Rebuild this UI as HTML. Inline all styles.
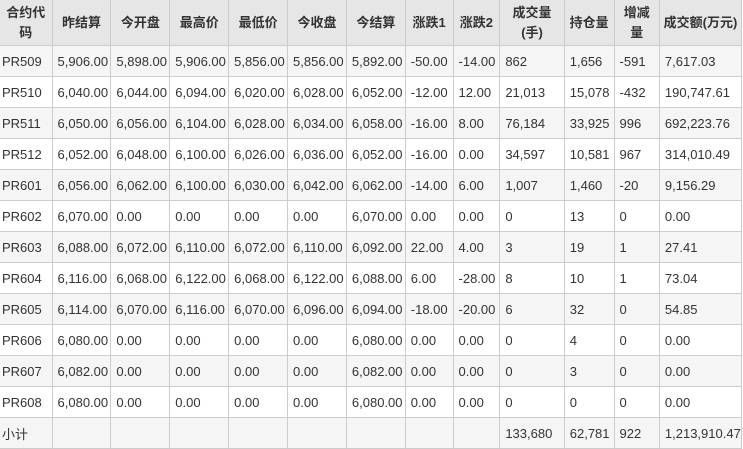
<!DOCTYPE html>
<html><head><meta charset="utf-8"><style>
body{margin:0;background:#fff;overflow:hidden}
table{border-collapse:collapse;table-layout:fixed;font-family:"Liberation Sans","Noto Sans CJK SC",sans-serif;font-size:13px;color:#333;position:absolute;left:-1px;top:-1px}
td,th{border:1px solid #ccc;padding:0 0 0 5px;height:30px;white-space:nowrap;overflow:hidden;text-align:left}
td:first-child{padding-left:2px}
th{background:#e6e6e6;height:45px;font-weight:bold;text-align:center;padding:0;line-height:20px}
tr.o td{background:#f5f5f5}
</style></head><body>
<table>
<colgroup><col style="width:53px"><col style="width:59px"><col style="width:59px"><col style="width:59px"><col style="width:59px"><col style="width:59px"><col style="width:59px"><col style="width:48px"><col style="width:47px"><col style="width:65px"><col style="width:50px"><col style="width:46px"><col style="width:82px"></colgroup>
<tr><th>合约代<br>码</th><th>昨结算</th><th>今开盘</th><th>最高价</th><th>最低价</th><th>今收盘</th><th>今结算</th><th>涨跌1</th><th>涨跌2</th><th>成交量<br>(手)</th><th>持仓量</th><th>增减<br>量</th><th>成交额(万元)</th></tr>
<tr class="o"><td>PR509</td><td>5,906.00</td><td>5,898.00</td><td>5,906.00</td><td>5,856.00</td><td>5,856.00</td><td>5,892.00</td><td>-50.00</td><td>-14.00</td><td>862</td><td>1,656</td><td>-591</td><td>7,617.03</td></tr>
<tr><td>PR510</td><td>6,040.00</td><td>6,044.00</td><td>6,094.00</td><td>6,020.00</td><td>6,028.00</td><td>6,052.00</td><td>-12.00</td><td>12.00</td><td>21,013</td><td>15,078</td><td>-432</td><td>190,747.61</td></tr>
<tr class="o"><td>PR511</td><td>6,050.00</td><td>6,056.00</td><td>6,104.00</td><td>6,028.00</td><td>6,034.00</td><td>6,058.00</td><td>-16.00</td><td>8.00</td><td>76,184</td><td>33,925</td><td>996</td><td>692,223.76</td></tr>
<tr><td>PR512</td><td>6,052.00</td><td>6,048.00</td><td>6,100.00</td><td>6,026.00</td><td>6,036.00</td><td>6,052.00</td><td>-16.00</td><td>0.00</td><td>34,597</td><td>10,581</td><td>967</td><td>314,010.49</td></tr>
<tr class="o"><td>PR601</td><td>6,056.00</td><td>6,062.00</td><td>6,100.00</td><td>6,030.00</td><td>6,042.00</td><td>6,062.00</td><td>-14.00</td><td>6.00</td><td>1,007</td><td>1,460</td><td>-20</td><td>9,156.29</td></tr>
<tr><td>PR602</td><td>6,070.00</td><td>0.00</td><td>0.00</td><td>0.00</td><td>0.00</td><td>6,070.00</td><td>0.00</td><td>0.00</td><td>0</td><td>13</td><td>0</td><td>0.00</td></tr>
<tr class="o"><td>PR603</td><td>6,088.00</td><td>6,072.00</td><td>6,110.00</td><td>6,072.00</td><td>6,110.00</td><td>6,092.00</td><td>22.00</td><td>4.00</td><td>3</td><td>19</td><td>1</td><td>27.41</td></tr>
<tr><td>PR604</td><td>6,116.00</td><td>6,068.00</td><td>6,122.00</td><td>6,068.00</td><td>6,122.00</td><td>6,088.00</td><td>6.00</td><td>-28.00</td><td>8</td><td>10</td><td>1</td><td>73.04</td></tr>
<tr class="o"><td>PR605</td><td>6,114.00</td><td>6,070.00</td><td>6,116.00</td><td>6,070.00</td><td>6,096.00</td><td>6,094.00</td><td>-18.00</td><td>-20.00</td><td>6</td><td>32</td><td>0</td><td>54.85</td></tr>
<tr><td>PR606</td><td>6,080.00</td><td>0.00</td><td>0.00</td><td>0.00</td><td>0.00</td><td>6,080.00</td><td>0.00</td><td>0.00</td><td>0</td><td>4</td><td>0</td><td>0.00</td></tr>
<tr class="o"><td>PR607</td><td>6,082.00</td><td>0.00</td><td>0.00</td><td>0.00</td><td>0.00</td><td>6,082.00</td><td>0.00</td><td>0.00</td><td>0</td><td>3</td><td>0</td><td>0.00</td></tr>
<tr><td>PR608</td><td>6,080.00</td><td>0.00</td><td>0.00</td><td>0.00</td><td>0.00</td><td>6,080.00</td><td>0.00</td><td>0.00</td><td>0</td><td>0</td><td>0</td><td>0.00</td></tr>
<tr class="o"><td>小计</td><td></td><td></td><td></td><td></td><td></td><td></td><td></td><td></td><td>133,680</td><td>62,781</td><td>922</td><td>1,213,910.47</td></tr>
</table>
</body></html>
